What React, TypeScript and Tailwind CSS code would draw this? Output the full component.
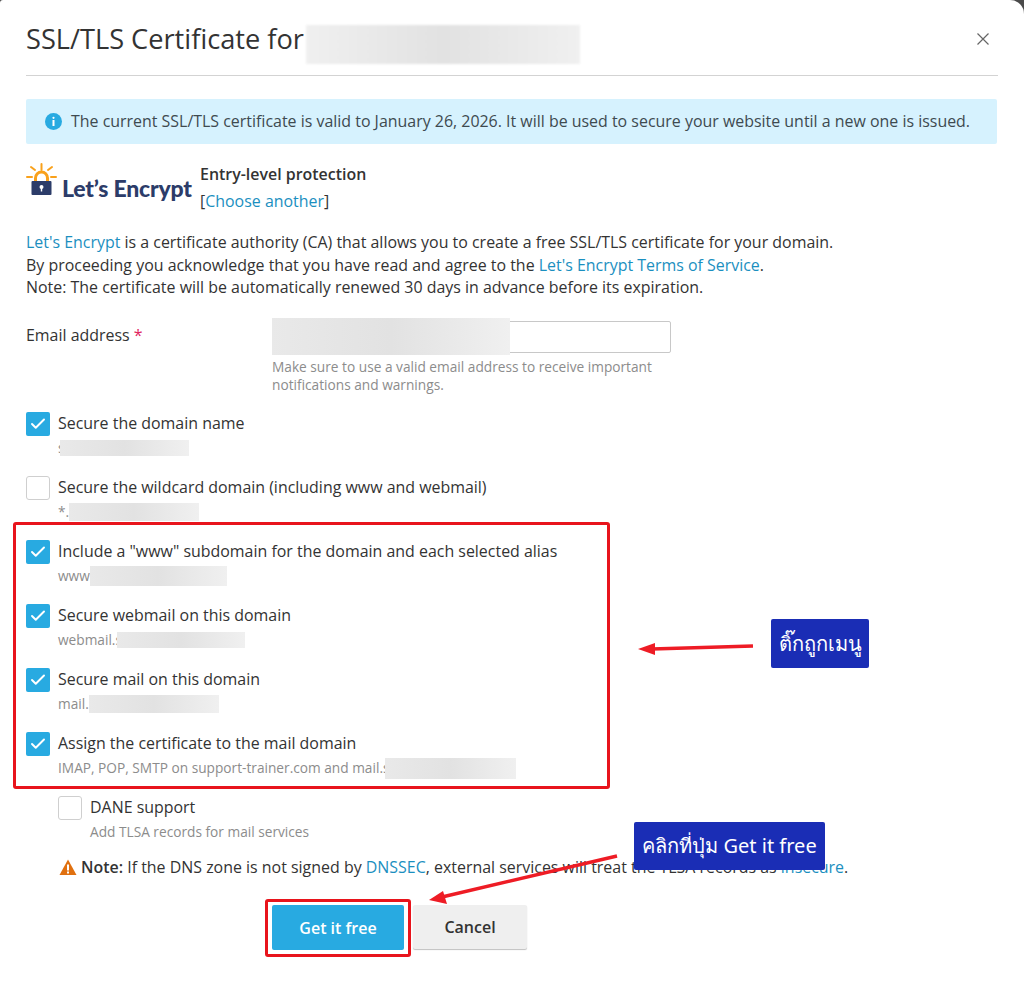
import { Check } from "lucide-react";

const LINK = "text-[#1b8fbf]";

// grey smear standing in for the hidden domain names
function Smear({ className }: { className: string }) {
    return (
        <span
            className={`inline-block bg-gradient-to-r from-[#e9e9e9] via-[#e2e2e2] to-[#f0f0f0] ${className}`}
        />
    );
}

function Box({ checked }: { checked?: boolean }) {
    return checked ? (
        <span className="flex h-[24px] w-[24px] shrink-0 items-center justify-center rounded-[2px] bg-[#28aae1]">
            <Check className="h-[18px] w-[18px] text-white" strokeWidth={2.6} />
        </span>
    ) : (
        <span className="block h-[24px] w-[24px] shrink-0 rounded-[3px] border border-[#cfcfcf] bg-white" />
    );
}

interface OptionProps {
    label: string;
    checked?: boolean;
    hint: string;
    smear?: string;
    className?: string;
}

function Option({ label, checked, hint, smear, className = "" }: OptionProps) {
    return (
        <div className={`flex h-[64px] gap-[8px] ${className}`}>
            <Box checked={checked} />
            <div>
                <div className="h-[23px] whitespace-nowrap text-[15.95px] leading-[23px] text-[#333]">{label}</div>
                <div className="mt-[3px] flex h-[20px] items-center whitespace-nowrap text-[13.7px] text-[#8c8c8c]">
                    {hint}
                    {smear && <Smear className={smear} />}
                </div>
            </div>
        </div>
    );
}

function LetsEncryptLogo() {
    return (
        <div className="flex h-[40px] w-[174px] shrink-0 items-start">
            <svg width="32" height="36" viewBox="0 0 32 36" className="mt-[2px] shrink-0">
                <g stroke="#f9a11b" strokeWidth="2" strokeLinecap="round">
                    <path d="M15.5 1v6" />
                    <path d="M5 4l4 3" />
                    <path d="M26 4l-4 3" />
                    <path d="M1 14h5" />
                    <path d="M25 14h5" />
                </g>
                <path d="M9.5 18v-3a6 6 0 0 1 12 0v3" fill="none" stroke="#f9a11b" strokeWidth="3" />
                <rect x="5.5" y="18" width="20" height="14" rx="1" fill="#2c3c69" />
                <circle cx="15.5" cy="24" r="2" fill="#fff" />
                <rect x="14.8" y="24.5" width="1.4" height="4" fill="#fff" />
            </svg>
            <span className="mt-[14px] ml-[4px] whitespace-nowrap font-['Lato'] text-[23px] font-black leading-[26px] tracking-[-0.2px] text-[#2c3c69]">
                Let’s Encrypt
            </span>
        </div>
    );
}

export default function App() {
    return (
        <div className="relative h-[983px] w-[1024px] overflow-hidden bg-[#4a4a4a] font-['Open_Sans',sans-serif]">
            <div className="h-full rounded-tr-[14px] rounded-tl-[3px] bg-white px-[26px]">
                {/* ── Header ─────────────────────────── */}
                <div className="flex h-[76px] items-center border-b border-[#d3d3d3] pt-[3px]">
                    <h1 className="text-[27.2px] leading-none text-[#333]">SSL/TLS Certificate for</h1>
                    <Smear className="mt-[10px] ml-[2px] h-[39px] w-[274px] from-[#f0f0f0] via-[#d6d6d6] to-[#ececec] blur-[1px]" />
                    <svg width="14" height="14" viewBox="0 0 14 14" className="ml-auto mr-[8px] text-[#666]">
                        <path d="M1.5 1.5l11 11M12.5 1.5l-11 11" stroke="currentColor" strokeWidth="1.2" fill="none" />
                    </svg>
                </div>

                {/* ── Info banner ────────────────────── */}
                <div className="mt-[23px] mr-[1px] flex h-[45px] items-center gap-[9px] rounded-[2px] bg-[#d6f2fe] pl-[19px] text-[15.95px] text-[#3e4a50]">
                    <svg width="17" height="17" viewBox="0 0 17 17" className="shrink-0">
                        <circle cx="8.5" cy="8.5" r="8.5" fill="#28aae1" />
                        <circle cx="8.5" cy="4.8" r="1.1" fill="#fff" />
                        <rect x="7.5" y="7" width="2" height="6" fill="#fff" />
                    </svg>
                    <span className="whitespace-nowrap">
                        The current SSL/TLS certificate is valid to January 26, 2026. It will be used to secure your website until a new one is issued.
                    </span>
                </div>

                {/* ── Certificate type ───────────────── */}
                <div className="mt-[17px] flex">
                    <LetsEncryptLogo />
                    <div className="text-[15.95px] leading-[27px] text-[#333]">
                        <div className="font-semibold">Entry-level protection</div>
                        <div>
                            [<span className={LINK}>Choose another</span>]
                        </div>
                    </div>
                </div>

                <div className="mt-[16px] whitespace-nowrap text-[15.95px] leading-[22.5px] text-[#333]">
                    <p>
                        <span className={LINK}>Let's Encrypt</span> is a certificate authority (CA) that allows you to create a free SSL/TLS certificate for your domain.
                    </p>
                    <p>
                        By proceeding you acknowledge that you have read and agree to the <span className={LINK}>Let's Encrypt Terms of Service</span>.
                    </p>
                    <p>Note: The certificate will be automatically renewed 30 days in advance before its expiration.</p>
                </div>

                {/* ── Email ──────────────────────────── */}
                <div className="mt-[22.5px] flex">
                    <div className="w-[246px] pt-[3px] text-[15.95px] leading-[23px] text-[#333]">
                        Email address <span className="text-[#e0245e]">*</span>
                    </div>
                    <div className="w-[399px]">
                        <div className="relative h-[32px] rounded-[2px] border border-[#c8c8c8] bg-white">
                            <Smear className="absolute top-[-4px] left-[-1px] h-[37px] w-[238px]" />
                        </div>
                        <p className="mt-[5px] text-[13.7px] leading-[18px] text-[#8c8c8c]">
                            Make sure to use a valid email address to receive important notifications and warnings.
                        </p>
                    </div>
                </div>

                {/* ── Options ────────────────────────── */}
                <div className="mt-[18px]">
                    <Option checked label="Secure the domain name" hint="s" smear="-ml-[5px] h-[16px] w-[129px]" />
                    <Option label="Secure the wildcard domain (including www and webmail)" hint="*." smear="h-[18px] w-[130px]" />
                    <Option checked label={'Include a "www" subdomain for the domain and each selected alias'} hint="www" smear="h-[20px] w-[137px]" />
                    <Option checked label="Secure webmail on this domain" hint="webmail.s" smear="-ml-[5px] h-[16px] w-[128px]" />
                    <Option checked label="Secure mail on this domain" hint="mail." smear="h-[18px] w-[130px]" />
                    <Option checked label="Assign the certificate to the mail domain" hint="IMAP, POP, SMTP on support-trainer.com and mail.s" smear="-ml-[5px] h-[21px] w-[131px]" />
                    <Option label="DANE support" hint="Add TLSA records for mail services" className="ml-[32px]" />
                </div>

                <div className="-mt-[4px] ml-[33px] flex items-center gap-[4px] text-[15.95px] leading-[22px] text-[#333]">
                    <svg width="18" height="16" viewBox="0 0 18 16" className="shrink-0">
                        <path d="M9 0.5L17.5 16H0.5Z" fill="#e0700f" />
                        <rect x="8" y="5.5" width="2" height="6" fill="#fff" />
                        <rect x="8" y="12.5" width="2" height="2" fill="#fff" />
                    </svg>
                    <span className="whitespace-nowrap">
                        <b className="font-semibold">Note:</b> If the DNS zone is not signed by <span className={LINK}>DNSSEC</span>, external services will treat the TLSA records as <span className={LINK}>insecure</span>.
                    </span>
                </div>

                {/* ── Actions ────────────────────────── */}
                <div className="mt-[27px] ml-[246px] flex gap-[9px]">
                    <button className="h-[45px] w-[132px] rounded-[2px] bg-[#28aae1] text-[16px] font-semibold text-white">
                        Get it free
                    </button>
                    <button className="h-[44px] w-[114px] rounded-[2px] bg-[#efefef] text-[16px] font-semibold text-[#333] shadow-[0_1px_1px_rgba(0,0,0,0.25)]">
                        Cancel
                    </button>
                </div>
            </div>

            {/* ── Annotations drawn over the screenshot ── */}
            <div className="absolute top-[522px] left-[13px] h-[267px] w-[597px] rounded-[3px] border-[3px] border-[#e8141c]" />
            <div className="absolute top-[899px] left-[265px] h-[58px] w-[146px] rounded-[3px] border-[3px] border-[#e8141c]" />
            <svg width="1024" height="983" className="absolute top-0 left-0" fill="#ee1c25">
                <path d="M753 646L652 649" stroke="#ee1c25" strokeWidth="3.5" />
                <path d="M638 649L655 643L655 655Z" />
                <path d="M617 856L442 897" stroke="#ee1c25" strokeWidth="3.5" />
                <path d="M429 900L443 891L447 904Z" />
            </svg>
            <div className="absolute top-[619px] left-[771px] flex h-[49px] w-[98px] items-center justify-center rounded-[2px] bg-[#1a2db5] font-['Noto_Sans',sans-serif] text-[20px] text-white">
                ติ๊กถูกเมนู
            </div>
            <div className="absolute top-[822px] left-[634px] flex h-[48px] w-[191px] items-center justify-center rounded-[2px] bg-[#1a2db5] font-['Noto_Sans',sans-serif] text-[20px] text-white">
                คลิกที่ปุ่ม Get it free
            </div>
        </div>
    );
}
